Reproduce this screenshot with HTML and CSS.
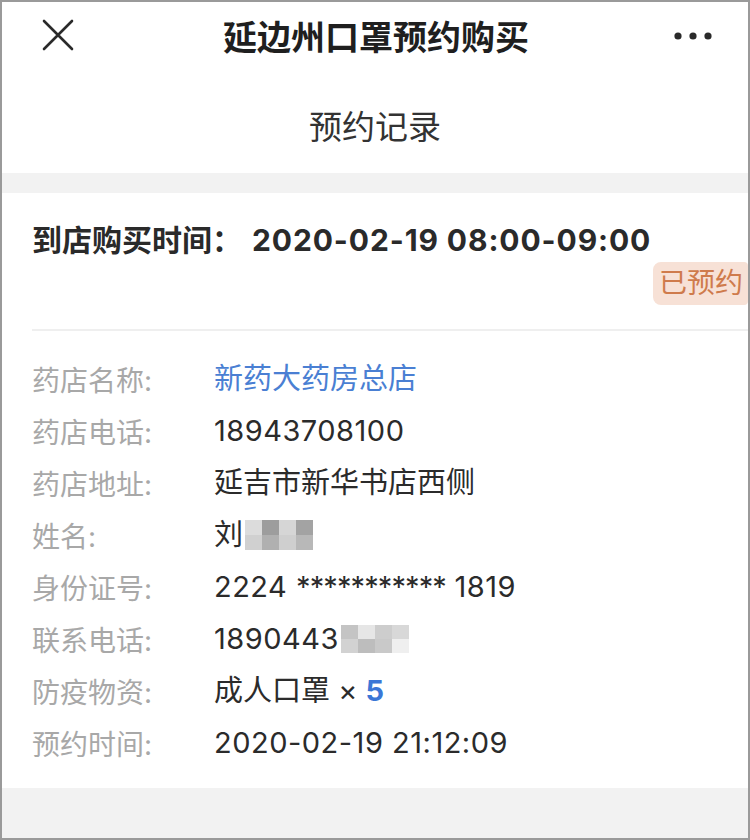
FILE: index.html
```html
<!DOCTYPE html>
<html lang="zh-CN">
<head>
<meta charset="utf-8">
<title>延边州口罩预约购买</title>
<link rel="stylesheet" href="styles.css">
</head>
<body>
<div class="frame">
  <header class="navbar">
    <span class="nav-close">
      <svg width="32" height="32" viewBox="0 0 32 32"><path d="M2 2 L30 30 M30 2 L2 30" stroke="#2a2a2a" stroke-width="2.6" stroke-linecap="round"/></svg>
    </span>
    <h1 class="nav-title">延边州口罩预约购买</h1>
    <span class="nav-more">
      <svg width="38" height="10" viewBox="0 0 38 10"><circle cx="4" cy="5" r="3.6" fill="#2a2a2a"/><circle cx="19" cy="5" r="3.6" fill="#2a2a2a"/><circle cx="34" cy="5" r="3.6" fill="#2a2a2a"/></svg>
    </span>
  </header>
  <div class="page-title">预约记录</div>
  <div class="band"></div>
  <section class="card">
    <div class="visit-time">到店购买时间：<span class="visit-num">2020-02-19 08:00-09:00</span></div>
    <div class="badge-row"><span class="badge">已预约</span></div>
    <div class="divider"></div>
    <dl class="rows">
      <div class="row"><dt>药店名称:</dt><dd class="link">新药大药房总店</dd></div>
      <div class="row"><dt>药店电话:</dt><dd class="num">18943708100</dd></div>
      <div class="row"><dt>药店地址:</dt><dd>延吉市新华书店西侧</dd></div>
      <div class="row"><dt>姓名:</dt><dd>刘<span class="blur blur-name"><i class="b1"></i><i class="b2"></i><i class="b3"></i><i class="b4"></i><i class="b5"></i><i class="b6"></i><i class="b7"></i><i class="b8"></i></span></dd></div>
      <div class="row"><dt>身份证号:</dt><dd class="num">2224 <span class="stars">***********</span> 1819</dd></div>
      <div class="row"><dt>联系电话:</dt><dd class="num">1890443<span class="blur blur-phone"><i class="b1"></i><i class="b2"></i><i class="b3"></i><i class="b4"></i><i class="b5"></i><i class="b6"></i><i class="b7"></i><i class="b8"></i></span></dd></div>
      <div class="row"><dt>防疫物资:</dt><dd>成人口罩 <span class="times">×</span> <b class="qty">5</b></dd></div>
      <div class="row"><dt>预约时间:</dt><dd class="num">2020-02-19 21:12:09</dd></div>
    </dl>
  </section>
  <div class="band band-bottom"></div>
</div>
</body>
</html>
```

FILE: styles.css
```css
* { box-sizing: border-box; }
html, body { margin: 0; padding: 0; background: #fff; }
body {
  font-family: "Inter", "Noto Sans CJK SC", sans-serif;
  color: #2b2b2b;
}
.frame {
  width: 750px;
  height: 840px;
  border: 2px solid #9a9a9a;
  display: flex;
  flex-direction: column;
  overflow: hidden;
}
.navbar {
  height: 68px;
  display: flex;
  align-items: center;
  justify-content: space-between;
  padding: 0 36px 0 40px;
}
.nav-close { display: flex; width: 32px; height: 32px; margin-top: -2px; }
.nav-title {
  margin: 0;
  font-size: 34px;
  font-weight: 700;
  color: #1f1f1f;
  font-family: "Noto Sans CJK SC", sans-serif;
  margin-top: -2px;
  padding-left: 4px;
}
.nav-more { display: flex; width: 38px; }
.page-title {
  height: 103px;
  padding-top: 6px;
  display: flex;
  align-items: center;
  justify-content: center;
  font-size: 33px;
  color: #333;
  font-family: "Noto Sans CJK SC", sans-serif;
}
.band { height: 20px; background: #f2f2f2; flex: none; }
.band-bottom { flex: 1; }
.card { padding: 25px 0 19px 30px; }
.visit-time {
  font-size: 30px;
  line-height: 40px;
  font-weight: 700;
  color: #2a2a2a;
  font-family: "Noto Sans CJK SC", sans-serif;
}
.visit-num {
  font-family: "Inter", sans-serif;
  font-weight: 700;
  letter-spacing: 0.9px;
  margin-left: 10px;
}
.badge-row { display: flex; justify-content: flex-end; margin-top: 2px; }
.badge {
  height: 43px;
  line-height: 43px;
  padding: 0 5px 0 6px;
  background: #f7e1d6;
  color: #cf7b4c;
  font-size: 28px;
  border-radius: 8px 4px 4px 8px;
}
.divider { height: 2px; background: #efefef; margin-top: 24px; }
.rows { margin: 22px 0 0; }
.row { display: flex; height: 52px; align-items: center; }
.row dt {
  width: 182px;
  font-size: 28px;
  color: #a8a8a8;
}
.row dd {
  margin: 0;
  font-size: 29px;
  color: #2b2b2b;
  white-space: pre;
  line-height: 40px;
}
.row dd.num { letter-spacing: 0.5px; }
.row dd.link { color: #4a7fd3; }
.stars { letter-spacing: -0.9px; }
.times { font-size: 29px; font-family: "Inter", sans-serif; }
.qty { color: #3b77d6; font-weight: 700; font-family: "Inter", sans-serif; }
.blur { display: inline-grid; margin-left: 2px; vertical-align: middle; }
.blur-name {
  grid-template-columns: repeat(4, 17px);
  grid-template-rows: repeat(2, 15px);
  background: #ececec;
  margin-top: -4px;
}
.blur-phone {
  grid-template-columns: repeat(4, 17px);
  grid-template-rows: repeat(2, 14px);
  background: #f0f0f0;
  margin-top: -4px;
}
.blur i { display: block; }
.blur-name .b1 { background: #dcdcdc; }
.blur-name .b2 { background: #9d9d9d; }
.blur-name .b3 { background: #d6d6d6; }
.blur-name .b4 { background: #a3a3a3; }
.blur-name .b5 { background: #d0d0d0; }
.blur-name .b6 { background: #b0b0b0; }
.blur-name .b7 { background: #cfcfcf; }
.blur-name .b8 { background: #b8b8b8; }
.blur-phone .b1 { background: #c4c4c4; }
.blur-phone .b2 { background: #e6e6e6; }
.blur-phone .b3 { background: #cdcdcd; }
.blur-phone .b4 { background: #d8d8d8; }
.blur-phone .b5 { background: #d2d2d2; }
.blur-phone .b6 { background: #bdbdbd; }
.blur-phone .b7 { background: #c9c9c9; }
.blur-phone .b8 { background: #efefef; }
```
